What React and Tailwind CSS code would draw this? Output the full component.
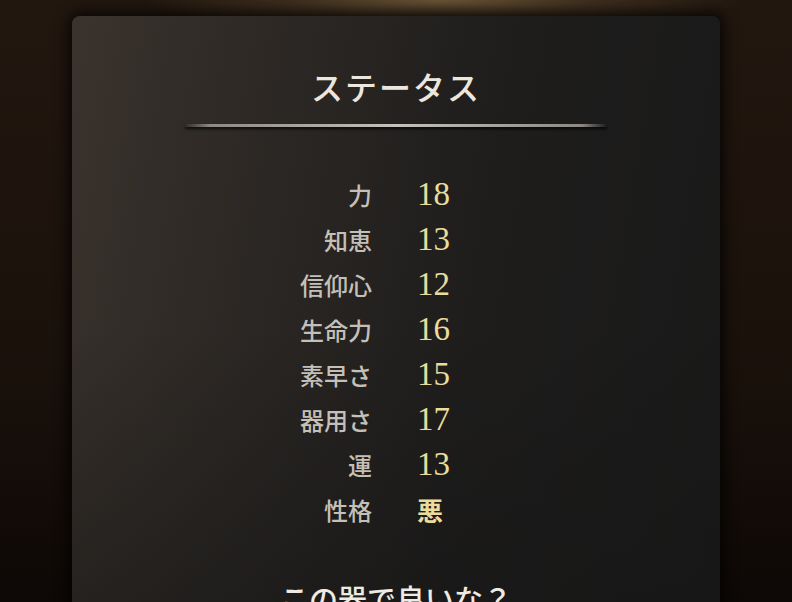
const stats = [
  { label: "力", value: "18" },
  { label: "知恵", value: "13" },
  { label: "信仰心", value: "12" },
  { label: "生命力", value: "16" },
  { label: "素早さ", value: "15" },
  { label: "器用さ", value: "17" },
  { label: "運", value: "13" },
  { label: "性格", value: "悪", kanji: true },
];

export default function App() {
  return (
    <div
      className="h-[602px] w-full overflow-hidden bg-[#1d130d] bg-[radial-gradient(ellipse_300px_34px_at_56%_0%,#6a5435_0%,#3d2e1e_50%,transparent_100%),linear-gradient(180deg,#22170f_0%,#1a110b_60%,#0d0806_100%)]"
      style={{ fontFamily: '"Noto Sans CJK JP", "Noto Sans", sans-serif' }}
    >
      <div className="mx-[72px] mt-[16px] h-[620px] rounded-[8px] bg-[linear-gradient(100deg,#3a332d_0%,#2b2724_30%,#1e1d1c_60%,#191919_100%)] shadow-[0_0_14px_4px_rgba(0,0,0,0.75)]">
        <div className="flex h-full flex-col items-center rounded-[8px] bg-[linear-gradient(180deg,transparent_0%,transparent_50%,rgba(20,20,20,0.5)_100%)] pt-[50px]">
          <h1 className="text-[32px] font-medium leading-[40px] tracking-[2px] text-[#ebe7df]">
            ステータス
          </h1>

          {/* silver rule under the heading */}
          <div className="mt-[18px] h-[3px] w-[422px] rounded-full bg-[linear-gradient(90deg,transparent_0%,#8d8a86_6%,#c4c1bc_50%,#8d8a86_94%,transparent_100%)] shadow-[0_2px_3px_rgba(0,0,0,0.8)]" />

          <div className="mt-[45px] grid w-full grid-cols-[300px_1fr] gap-x-[45px]">
            {stats.map((s) => (
              <div key={s.label} className="contents">
                <div className="text-right text-[24px] font-medium leading-[45px] text-[#c4c0b8]">
                  {s.label}
                </div>
                <div
                  className={
                    s.kanji
                      ? "text-[26px] font-bold leading-[45px] text-[#eadc9c]"
                      : "text-[33px] font-medium leading-[45px] text-[#eadc9c]"
                  }
                  style={
                    s.kanji
                      ? undefined
                      : { fontFamily: '"Liberation Serif", "DejaVu Serif", serif' }
                  }
                >
                  {s.value}
                </div>
              </div>
            ))}
          </div>

          <p className="mt-[46px] text-[29px] font-medium leading-[40px] text-[#eeeae4]">
            この器で良いな？
          </p>
        </div>
      </div>
    </div>
  );
}
